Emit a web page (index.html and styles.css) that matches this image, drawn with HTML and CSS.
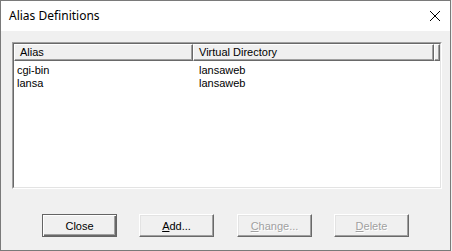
FILE: index.html
```html
<!DOCTYPE html>
<html lang="en">
<head>
  <meta charset="UTF-8">
  <title>Alias Definitions</title>
  <link rel="stylesheet" href="styles.css">
</head>
<body>
  <div class="window">
    <div class="titlebar">
      <span class="title">Alias Definitions</span>
      <svg class="close-x" width="12" height="12" viewBox="0 0 12 12">
        <path d="M1 1 L11 11 M11 1 L1 11" stroke="#000" stroke-width="1" fill="none"/>
      </svg>
    </div>

    <div class="dialog">
      <div class="listview">
        <div class="lv-inner">
          <div class="lv-header">
            <div class="hcell col-alias">Alias</div>
            <div class="hcell col-dir">Virtual Directory</div>
            <div class="hcell filler"></div>
          </div>
          <div class="lv-row">
            <span class="col-alias">cgi-bin</span>
            <span class="col-dir">lansaweb</span>
          </div>
          <div class="lv-row">
            <span class="col-alias">lansa</span>
            <span class="col-dir">lansaweb</span>
          </div>
        </div>
      </div>

      <div class="buttons">
        <button class="btn default">Close</button>
        <button class="btn"><u>A</u>dd...</button>
        <button class="btn" disabled><u>C</u>hange...</button>
        <button class="btn" disabled><u>D</u>elete</button>
      </div>
    </div>
  </div>
</body>
</html>
```

FILE: styles.css
```css
* {
  margin: 0;
  padding: 0;
  box-sizing: border-box;
}

body {
  width: 452px;
  height: 251px;
  background-color: #f0f0f0;
  font-family: 'Liberation Sans', Arial, sans-serif;
  font-size: 11px;
  color: #000;
  overflow: hidden;
}

.window {
  width: 451px;
  height: 251px;
  border: 1px solid #7a7a7a;
  display: flex;
  flex-direction: column;
}

.titlebar {
  height: 30px;
  background-color: #fff;
  display: flex;
  align-items: center;
  justify-content: space-between;
  padding: 0 8px 0 8px;
}

.title {
  font-family: 'Noto Sans', 'Open Sans', sans-serif;
  font-size: 12px;
  padding-bottom: 1px;
}

.close-x {
  margin-right: 1px;
}

.dialog {
  flex: 1;
  background-color: #f0f0f0;
  padding: 11px 0 0 11px;
}

/* sunken list box */
.listview {
  width: 430px;
  height: 147px;
  border: 1px solid;
  border-color: #a0a0a0 #fff #fff #a0a0a0;
}

.lv-inner {
  height: 100%;
  background-color: #fff;
  border: 1px solid;
  border-color: #696969 #e3e3e3 #e3e3e3 #696969;
}

.lv-header {
  display: flex;
  height: 17px;
}

.hcell {
  height: 17px;
  line-height: 15px;
  padding-left: 5px;
  background-color: #f0f0f0;
  border-top: 1px solid #fff;
  border-left: 1px solid #fff;
  border-right: 1px solid #696969;
  border-bottom: 1px solid #696969;
  box-shadow: inset -1px -1px 0 #a0a0a0;
}

.hcell.col-alias {
  width: 179px;
}

.hcell.col-dir {
  width: 241px;
}

.hcell.filler {
  flex: 1;
  padding: 0;
}

.lv-row {
  display: flex;
  height: 13px;
  line-height: 13px;
}

.lv-header + .lv-row {
  margin-top: 3px;
}

.lv-row .col-alias {
  width: 181px;
  padding-left: 3px;
}

.lv-row .col-dir {
  padding-left: 4px;
}

.buttons {
  display: flex;
  gap: 22px;
  margin-top: 25px;
  padding-left: 30px;
}

.btn {
  width: 75px;
  height: 23px;
  font-family: 'Liberation Sans', Arial, sans-serif;
  font-size: 11px;
  color: #000;
  background-color: #f0f0f0;
  border: 1px solid;
  border-color: #fff #696969 #696969 #fff;
  box-shadow: inset -1px -1px 0 #a0a0a0, inset 1px 1px 0 #e3e3e3;
}

.btn:nth-child(3) {
  margin-left: 1px;
}

.btn.default {
  border: 1px solid #646464;
  box-shadow: inset 1px 1px 0 #fff, inset -1px -1px 0 #696969, inset -2px -2px 0 #a0a0a0;
}

.btn:disabled {
  color: #a0a0a0;
  text-shadow: 1px 1px 0 #fff;
}
```
